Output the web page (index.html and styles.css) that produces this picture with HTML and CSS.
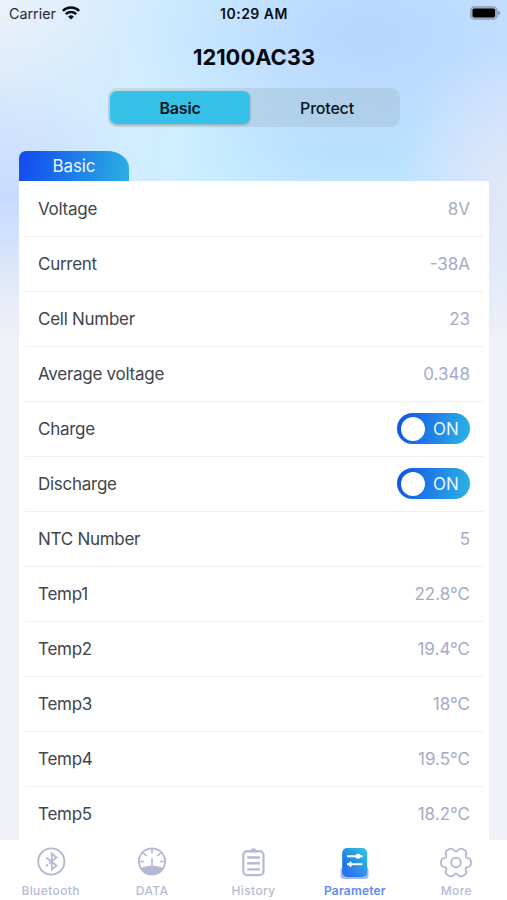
FILE: index.html
```html
<!DOCTYPE html>
<html lang="en">
<head>
<meta charset="utf-8">
<title>Parameter</title>
<link rel="stylesheet" href="styles.css">
</head>
<body>
<div class="screen">
  <header class="status">
    <div class="carrier"><span class="carrier-name">Carrier</span>
      <svg width="18" height="14" viewBox="0 0 18 14" fill="none" stroke="#080c14" stroke-width="2.5"><path d="M.8 4.9a11.8 11.8 0 0 1 16.4 0M3.8 8.1a7.4 7.4 0 0 1 10.4 0"/><path d="M9 13.6 6.1 10.7a4.2 4.2 0 0 1 5.8 0z" fill="#080c14" stroke="none"/></svg>
    </div>
    <div class="time">10:29 AM</div>
    <svg class="battery" width="31" height="14" viewBox="0 0 31 14"><rect x=".8" y=".8" width="26.2" height="12.4" rx="3.8" fill="#aab7d3" stroke="#8f99b3" stroke-width="1.3"/><rect x="2.5" y="2.5" width="22.6" height="9" rx="1.8" fill="#000"/><path d="M28.2 4.8q2 .8 2 2.2t-2 2.2z" fill="#838da5"/></svg>
  </header>
  <h1 class="title">12100AC33</h1>
  <div class="segment"><div class="seg active">Basic</div><div class="seg">Protect</div></div>
  <main class="panel">
    <div class="tab">Basic</div>
    <div class="card">
      <div class="row"><span>Voltage</span><span class="value">8V</span></div>
      <div class="row"><span>Current</span><span class="value">-38A</span></div>
      <div class="row"><span>Cell Number</span><span class="value">23</span></div>
      <div class="row"><span>Average voltage</span><span class="value">0.348</span></div>
      <div class="row"><span>Charge</span><span class="switch"><i class="knob"></i>ON</span></div>
      <div class="row"><span>Discharge</span><span class="switch"><i class="knob"></i>ON</span></div>
      <div class="row"><span>NTC Number</span><span class="value">5</span></div>
      <div class="row"><span>Temp1</span><span class="value">22.8°C</span></div>
      <div class="row"><span>Temp2</span><span class="value">19.4°C</span></div>
      <div class="row"><span>Temp3</span><span class="value">18°C</span></div>
      <div class="row"><span>Temp4</span><span class="value">19.5°C</span></div>
      <div class="row"><span>Temp5</span><span class="value">18.2°C</span></div>
    </div>
  </main>
  <nav class="nav">
    <div class="item">
      <svg width="32" height="34" viewBox="0 0 32 34" fill="none" stroke="#b5b9d6" stroke-width="1.9"><circle cx="16.3" cy="16.5" r="13.1"/><path d="m11 12.5 10.500 8-4.700 4V8.500l4.700 4-7.500 6" stroke-width="1.8"/><circle cx="12" cy="20.300" r="1.200" fill="#b5b9d6" stroke="none"/></svg>
      <span>Bluetooth</span>
    </div>
    <div class="item">
      <svg width="32" height="34" viewBox="0 0 32 34" fill="none" stroke="#b5b9d6" stroke-width="1.9"><circle cx="16" cy="16.5" r="13.1"/><path d="M4.300 23.200Q16 18 27.700 23.200 23 29.500 16 29.500T4.300 23.200z" fill="#b5b9d6" stroke="none"/><path d="M16 4v4.500M7.500 8l3 3M24.500 8l-3 3M3.500 16.500h4.500M28.500 16.500H24M16 13.500v8.500" stroke-width="1.7"/></svg>
      <span>DATA</span>
    </div>
    <div class="item">
      <svg width="32" height="34" viewBox="0 0 32 34" fill="none" stroke="#b5b9d6"><path d="M11.500 7.500V5h2Q14 3.200 16.300 3.200T19.300 5h2v2.500z" fill="#b5b9d6" stroke="none"/><rect x="6.300" y="6.200" width="20.200" height="24" rx="4" stroke-width="2.200"/><path d="M10.200 12.500h12.600M10.200 18.300h12.600M10.200 24.400h12.600" stroke-width="2.400"/></svg>
      <span>History</span>
    </div>
    <div class="item selected">
      <svg width="32" height="34" viewBox="0 0 32 34"><defs><linearGradient id="pg" x1="1" y1="0" x2="0" y2="1"><stop offset="0" stop-color="#36cbdc"/><stop offset=".5" stop-color="#2290e6"/><stop offset="1" stop-color="#1856ee"/></linearGradient></defs><rect x="1.5" y="22" width="28" height="12" rx="3.500" fill="#a0bcf4"/><rect x="3.200" y="3" width="25" height="29" rx="5" fill="url(#pg)"/><path d="M3.200 22h25v5.500a4 4 0 0 1-4 4H7.200a4 4 0 0 1-4-4z" fill="#5e97f4" opacity=".25"/><g stroke="#fff" stroke-width="2" fill="#fff"><path d="M8 11.200h15.500M8 19.300h15.500"/><circle cx="19" cy="11.200" r="1.500"/><path d="m12 16.800-3.500 2.500 3.500 2.500z" stroke-width="1"/></g></svg>
      <span>Parameter</span>
    </div>
    <div class="item">
      <svg width="32" height="34" viewBox="0 0 32 34" fill="none" stroke="#b5b9d6" stroke-width="1.9"><path transform="translate(16 17.5) scale(1 .97)" d="M15 0Q15 4.100 12 4.550Q8.700 5 10 8.150Q11.300 11.300 7.700 13.400Q4.100 15.500 2.050 12.750Q0 10-2.050 12.750Q-4.100 15.500-7.700 13.400Q-11.300 11.300-10 8.150Q-8.700 5-12 4.550Q-15 4.100-15 0Q-15-4.100-12-4.550Q-8.700-5-10-8.150Q-11.300-11.300-7.700-13.400Q-4.100-15.500-2.050-12.750Q0-10 2.050-12.750Q4.100-15.500 7.700-13.400Q11.300-11.300 10-8.150Q8.700-5 12-4.550Q15-4.100 15 0z"/><circle cx="16" cy="17.5" r="4.800"/></svg>
      <span>More</span>
    </div>
  </nav>
</div>
</body>
</html>
```
FILE: styles.css
```css
* { box-sizing: border-box; }
body { margin: 0; font-family: Inter, "Liberation Sans", sans-serif; }
.screen {
  width: 507px; height: 900px; overflow: hidden;
  display: flex; flex-direction: column;
  background:
    linear-gradient(180deg, rgba(240,240,247,0) 200px, #f0f0f7 340px),
    radial-gradient(ellipse 130px 100px at 0 0, #ebf1fa, rgba(235,241,250,0)),
    radial-gradient(ellipse 110px 150px at 507px 190px, #e0e7f8, rgba(224,231,248,0)),
    radial-gradient(ellipse 240px 140px at 370px 35px, #b9d8ff 15%, rgba(185,216,255,0)),
    radial-gradient(ellipse 170px 80px at 350px 150px, #b6e2fc, rgba(182,226,252,0)),
    radial-gradient(ellipse 150px 150px at 0 225px, #c7dcfd 20%, rgba(199,220,253,0)),
    linear-gradient(100deg, #daeafc, #cdeefe 35%, #c5e5ff 65%, #d0e0fd);
}
.status { flex: none; height: 28px; padding: 0 6px 0 9px; display: grid; grid-template-columns: 1fr auto 1fr; align-items: center; font-size: 14px; color: #080c14; }
.carrier { display: flex; align-items: center; gap: 6px; }
.carrier-name { font-size: 14.3px; color: #242a34; margin-top: -1px; }
.carrier svg { margin-top: -3px; }
.time { font-size: 14px; font-weight: 600; letter-spacing: .5px; margin: -1px 2px 0 0; }
.battery { justify-self: end; margin-top: -2px; }
.title { flex: none; margin: 14px 0 0 1px; height: 30px; line-height: 30px; text-align: center; font-size: 21.9px; font-weight: 700; color: #050910; }
.segment { flex: none; align-self: center; width: 292px; height: 39px; margin: 16px 0 0 1px; padding: 3px 2px; border-radius: 9px; background: rgba(118,128,128,.16); display: flex; }
.seg { flex: 1; display: flex; align-items: center; justify-content: center; border-radius: 7px; padding-left: 6px; font-size: 16px; letter-spacing: -.2px; font-weight: 500; color: #07131f; }
.seg.active { flex: 0 0 140px; padding-left: 0; background: #36c1e8; box-shadow: 0 1px 3px rgba(0,0,0,.25); font-weight: 600; }
.panel { flex: 1; min-height: 0; overflow: hidden; margin: 24px 18px 0 19px; }
.tab { width: 110px; height: 30px; border-radius: 7px 22px 0 0 / 7px 17px 0 0; background: linear-gradient(100deg, #1450ee 8%, #2bb0e3); color: #eef7ff; display: flex; align-items: center; justify-content: center; font-size: 17px; letter-spacing: -.1px; }
.card { background: #fff; padding: 1px 6px 0; }
.row { height: 55px; padding: 0 13px; border-bottom: 1px solid #eeeff5; display: flex; align-items: center; justify-content: space-between; font-size: 17px; letter-spacing: -.27px; color: #41454d; }
.value { color: #a4abc9; letter-spacing: 0; }
.switch { width: 73px; height: 31px; margin-top: -1px; border-radius: 16px; background: linear-gradient(100deg, #134fe9, #2bb4e4); color: #e9f5ff; display: flex; align-items: center; padding-left: 4px; gap: 8px; letter-spacing: .1px; }
.knob { width: 24px; height: 24px; border-radius: 50%; background: #fff; }
.nav { flex: none; height: 60px; background: #fff; display: grid; grid-template-columns: repeat(5, 1fr); }
.item { display: flex; flex-direction: column; align-items: center; padding-top: 5px; font-size: 12px; line-height: 16px; font-weight: 500; letter-spacing: .4px; color: #b7bad4; }
.item span { margin-top: 4px; }
.selected { color: #5c8bf6; font-weight: 600; letter-spacing: .2px; }
```
